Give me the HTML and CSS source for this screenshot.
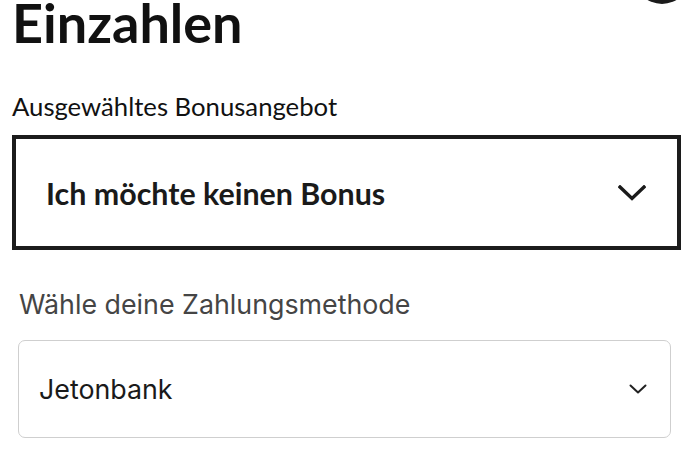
FILE: index.html
```html
<!DOCTYPE html>
<html lang="de">
<head>
<meta charset="utf-8">
<title>Einzahlen</title>
<link rel="stylesheet" href="styles.css">
</head>
<body>
<main class="deposit">
  <button class="close-btn" aria-label="Schließen"></button>
  <h1 class="deposit-title">Einzahlen</h1>

  <section class="bonus">
    <div class="bonus-label">Ausgewähltes Bonusangebot</div>
    <div class="bonus-select">
      <span class="bonus-value">Ich möchte keinen Bonus</span>
      <svg class="bonus-chevron" viewBox="0 0 28 16" width="28" height="16" aria-hidden="true">
        <path d="M2 2 L14 13.5 L26 2" fill="none" stroke="currentColor" stroke-width="3.4" stroke-linecap="square"/>
      </svg>
    </div>
  </section>

  <section class="payment">
    <div class="payment-label">Wähle deine Zahlungsmethode</div>
    <div class="payment-select">
      <span class="payment-value">Jetonbank</span>
      <svg class="payment-chevron" viewBox="0 0 18 10" width="18" height="10" aria-hidden="true">
        <path d="M1.5 1.5 L9 8.5 L16.5 1.5" fill="none" stroke="currentColor" stroke-width="2" stroke-linecap="round" stroke-linejoin="round"/>
      </svg>
    </div>
  </section>
</main>
</body>
</html>
```

FILE: styles.css
```css
html, body {
  margin: 0;
  padding: 0;
  background: #ffffff;
}

.deposit {
  position: relative;
  width: 700px;
  height: 455px;
  overflow: hidden;
  font-family: Lato, "Noto Sans", sans-serif;
  color: #111;
}

/* round close button, mostly scrolled above the top edge */
.close-btn {
  position: absolute;
  top: -52px;
  left: 634px;
  width: 56px;
  height: 56px;
  border: none;
  border-radius: 50%;
  background: #1b1b1b;
  padding: 0;
}

.deposit-title {
  margin: 0;
  padding-left: 12px;
  font-size: 54px;
  font-weight: 700;
  line-height: 46px;
  color: #111;
}

.bonus {
  margin: 46px 19px 0 12px;
}

.bonus-label {
  font-size: 25.7px;
  line-height: 28px;
  font-weight: 400;
  color: #111;
  margin-bottom: 15px;
}

.bonus-select {
  display: flex;
  align-items: center;
  justify-content: space-between;
  height: 107px;
  border: 4px solid #1c1c1c;
  padding: 0 31px 0 30px;
}

.bonus-value {
  font-size: 30.4px;
  font-weight: 700;
  color: #1a1a1a;
}

.bonus-chevron {
  display: block;
  color: #1a1a1a;
}

.payment {
  margin: 38px 29px 0 18px;
  font-family: Inter, "Noto Sans", sans-serif;
}

.payment-label {
  font-size: 26.8px;
  line-height: 32px;
  color: #454545;
  padding-left: 1px;
  margin-bottom: 20px;
}

.payment-select {
  display: flex;
  align-items: center;
  justify-content: space-between;
  height: 96px;
  border: 1px solid #cfcfcf;
  border-radius: 7px;
  padding: 0 23px 0 20px;
}

.payment-value {
  font-size: 26.8px;
  color: #1a1a1a;
}

.payment-chevron {
  display: block;
  color: #222;
}
```
